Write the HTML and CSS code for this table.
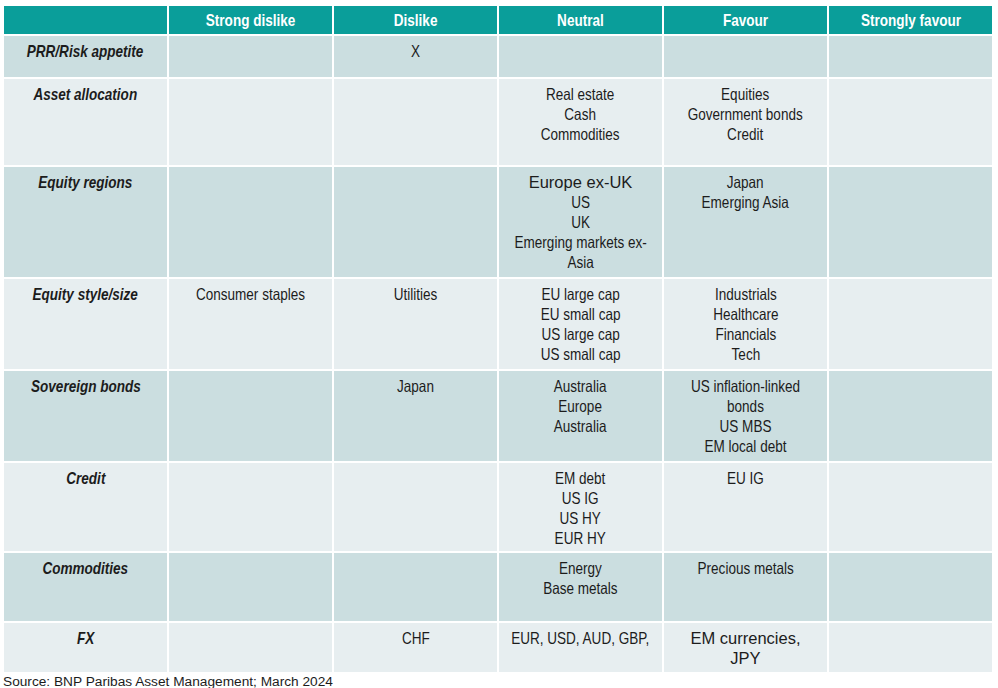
FILE: index.html
```html
<!DOCTYPE html>
<html lang="en">
<head>
<meta charset="utf-8">
<title>Asset allocation views</title>
<link rel="stylesheet" href="styles.css">
</head>
<body>
<div class="page">
  <div class="grid">
    <div class="cell head"></div>
    <div class="cell head"><span class="t">Strong dislike</span></div>
    <div class="cell head"><span class="t">Dislike</span></div>
    <div class="cell head"><span class="t">Neutral</span></div>
    <div class="cell head"><span class="t">Favour</span></div>
    <div class="cell head"><span class="t">Strongly favour</span></div>

    <div class="cell dark label"><span class="t">PRR/Risk appetite</span></div>
    <div class="cell dark"></div>
    <div class="cell dark"><span class="t">X</span></div>
    <div class="cell dark"></div>
    <div class="cell dark"></div>
    <div class="cell dark"></div>

    <div class="cell light label"><span class="t">Asset allocation</span></div>
    <div class="cell light"></div>
    <div class="cell light"></div>
    <div class="cell light"><span class="t">Real estate<br>Cash<br>Commodities</span></div>
    <div class="cell light"><span class="t">Equities<br>Government bonds<br>Credit</span></div>
    <div class="cell light"></div>

    <div class="cell dark label"><span class="t">Equity regions</span></div>
    <div class="cell dark"></div>
    <div class="cell dark"></div>
    <div class="cell dark"><span class="wide">Europe ex-UK</span><span class="t">US<br>UK<br>Emerging markets ex-<br>Asia</span></div>
    <div class="cell dark"><span class="t">Japan<br>Emerging Asia</span></div>
    <div class="cell dark"></div>

    <div class="cell light label"><span class="t">Equity style/size</span></div>
    <div class="cell light"><span class="t">Consumer staples</span></div>
    <div class="cell light"><span class="t">Utilities</span></div>
    <div class="cell light"><span class="t">EU large cap<br>EU small cap<br>US large cap<br>US small cap</span></div>
    <div class="cell light"><span class="t">Industrials<br>Healthcare<br>Financials<br>Tech</span></div>
    <div class="cell light"></div>

    <div class="cell dark label"><span class="t">Sovereign bonds</span></div>
    <div class="cell dark"></div>
    <div class="cell dark"><span class="t">Japan</span></div>
    <div class="cell dark"><span class="t">Australia<br>Europe<br>Australia</span></div>
    <div class="cell dark"><span class="t">US inflation-linked<br>bonds<br>US MBS<br>EM local debt</span></div>
    <div class="cell dark"></div>

    <div class="cell light label"><span class="t">Credit</span></div>
    <div class="cell light"></div>
    <div class="cell light"></div>
    <div class="cell light"><span class="t">EM debt<br>US IG<br>US HY<br>EUR HY</span></div>
    <div class="cell light"><span class="t">EU IG</span></div>
    <div class="cell light"></div>

    <div class="cell dark label"><span class="t">Commodities</span></div>
    <div class="cell dark"></div>
    <div class="cell dark"></div>
    <div class="cell dark"><span class="t">Energy<br>Base metals</span></div>
    <div class="cell dark"><span class="t">Precious metals</span></div>
    <div class="cell dark"></div>

    <div class="cell light label"><span class="t">FX</span></div>
    <div class="cell light"></div>
    <div class="cell light"><span class="t">CHF</span></div>
    <div class="cell light"><span class="t">EUR, USD, AUD, GBP,</span></div>
    <div class="cell light"><span class="wide">EM currencies,<br>JPY</span></div>
    <div class="cell light"></div>
  </div>
  <p class="source">Source: BNP Paribas Asset Management; March 2024</p>
</div>
</body>
</html>
```

FILE: styles.css
```css
html, body {
  margin: 0;
  padding: 0;
  background: #ffffff;
}

.page {
  padding: 6px 0 0 4px;
  width: 998px;
  height: 688px;
  box-sizing: border-box;
  overflow: hidden;
}

.grid {
  display: grid;
  grid-template-columns: repeat(6, 163px);
  grid-template-rows: 28px 41px 86px 110px 90px 90px 88px 68px 49px;
  column-gap: 2px;
  row-gap: 2px;
  font-family: "Liberation Sans", Arial, sans-serif;
  font-size: 16.5px;
  line-height: 20px;
  color: #1c1c1c;
  text-align: center;
}

.cell {
  padding: 5px 0 0;
  box-sizing: border-box;
  display: flex;
  flex-direction: column;
  align-items: center;
  min-width: 0;
}

.t {
  display: block;
  white-space: nowrap;
  transform: scaleX(0.82);
  transform-origin: center;
}

.wide {
  display: block;
  white-space: nowrap;
  font-size: 16.5px;
}

.head {
  background: #0a9e9a;
  color: #ffffff;
  font-weight: bold;
  padding: 0;
  justify-content: center;
}

.dark {
  background: #cbdee0;
}

.light {
  background: #e7eef0;
}

.label {
  font-weight: bold;
  font-style: italic;
}

.source {
  margin: 2px 0 0 -1px;
  font-family: "Liberation Sans", Arial, sans-serif;
  font-size: 13.7px;
  line-height: 15px;
  color: #1c1c1c;
}
```
